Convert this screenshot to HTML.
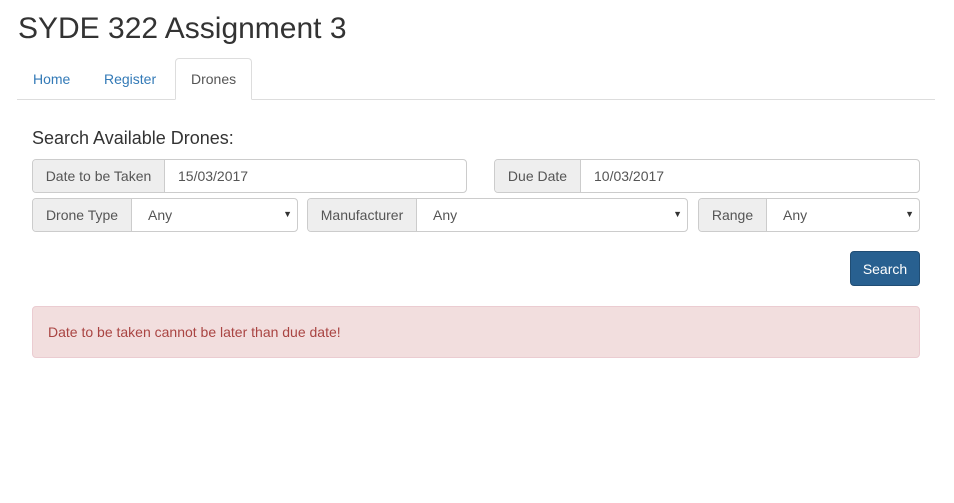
<!DOCTYPE html><html><head><style>
body{margin:0;width:954px;height:503px;background:#fff;font-family:"Liberation Sans",sans-serif;font-size:14px;color:#333;position:relative;overflow:hidden}
.a{position:absolute;box-sizing:border-box}
.g{position:absolute;box-sizing:border-box;height:34px;border:1px solid #ccc;border-radius:4px;display:flex;overflow:hidden}
.ad{background:#eee;border-right:1px solid #ccc;display:flex;align-items:center;justify-content:center;color:#555}
.v{display:flex;align-items:center;padding-left:13px;color:#555;flex:1;position:relative}
.ar{position:absolute;right:5px;top:10px;font-size:9px;color:#333}
</style></head><body>
<div class="a" style="left:18px;top:12px;font-size:30px;color:#333">SYDE 322 Assignment 3</div>
<div class="a" style="left:17px;top:99px;width:918px;height:1px;background:#ddd"></div>
<div class="a" style="left:33px;top:71px;color:#337ab7">Home</div>
<div class="a" style="left:104px;top:71px;color:#337ab7">Register</div>
<div class="a" style="left:175px;top:58px;width:77px;height:42px;border:1px solid #ddd;border-bottom-color:#fff;border-radius:4px 4px 0 0;background:#fff;color:#555;padding:12px 0 0 15px">Drones</div>
<div class="a" style="left:32px;top:128px;font-size:18px;color:#333">Search Available Drones:</div>
<div class="g" style="left:32px;top:159px;width:435px"><div class="ad" style="width:131px">Date to be Taken</div><div class="v">15/03/2017</div></div>
<div class="g" style="left:494px;top:159px;width:426px"><div class="ad" style="width:85px">Due Date</div><div class="v">10/03/2017</div></div>
<div class="g" style="left:32px;top:198px;width:266px"><div class="ad" style="width:98px">Drone Type</div><div class="v" style="padding-left:16px">Any<span class="ar">▼</span></div></div>
<div class="g" style="left:307px;top:198px;width:381px"><div class="ad" style="width:108px">Manufacturer</div><div class="v" style="padding-left:16px">Any<span class="ar">▼</span></div></div>
<div class="g" style="left:698px;top:198px;width:222px"><div class="ad" style="width:67px">Range</div><div class="v" style="padding-left:16px">Any<span class="ar">▼</span></div></div>
<div class="a" style="left:850px;top:251px;width:70px;height:35px;background:#286090;border:1px solid #204d74;border-radius:4px;color:#fff;display:flex;align-items:center;justify-content:center">Search</div>
<div class="a" style="left:32px;top:306px;width:888px;height:52px;background:#f2dede;border:1px solid #ebccd1;border-radius:4px;color:#a94442;padding:17px 0 0 15px">Date to be taken cannot be later than due date!</div>
</body></html>
